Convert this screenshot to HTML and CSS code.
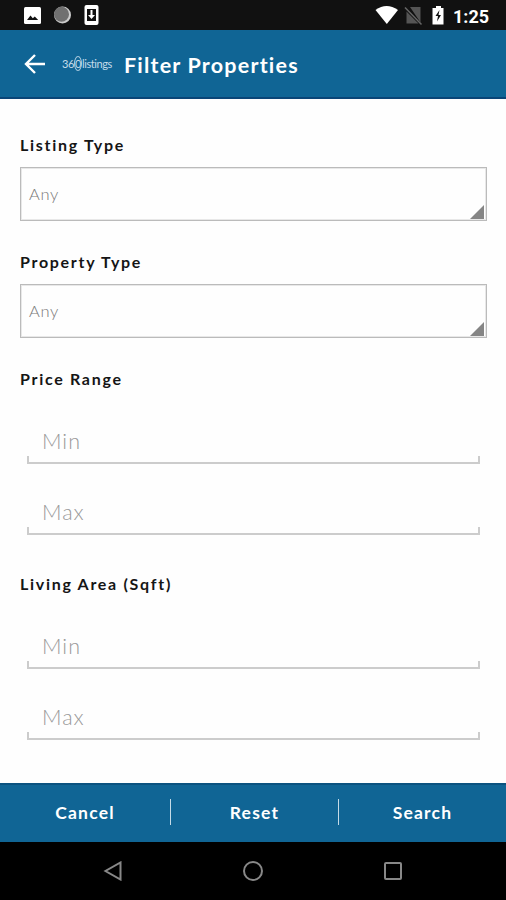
FILE: index.html
```html
<!DOCTYPE html>
<html lang="en">
<head>
<meta charset="utf-8">
<title>Filter Properties</title>
<link rel="stylesheet" href="styles.css">
</head>
<body>
<div class="status">
  <svg class="status-icons" width="120" height="30" viewBox="0 0 120 30">
    <rect x="24" y="7" width="17" height="17" rx="1.5" fill="#fff"/>
    <path d="M27 20l3.500-4.500 2.300 2.700 2-1.800 3.400 3.600z" fill="#111"/>
    <circle cx="62.500" cy="15" r="8.500" fill="#ccc"/>
    <circle cx="61.500" cy="14.300" r="7.500" fill="#707070"/>
    <rect x="84.500" y="5" width="14" height="20" rx="2" fill="#fff"/>
    <path d="M87 9h9v12h-9z" fill="#111"/>
    <path d="M90.500 10h2v5h2.500l-3.500 4-3.500-4h2.500z" fill="#fff"/>
  </svg>
  <svg class="status-icons" width="80" height="30" viewBox="370 0 80 30">
    <path d="M375.500 10Q386.500 2 398 10L386.800 24z" fill="#fff"/>
    <path d="M410 7h10.500v15.500zM406.500 11.500v12h12z" fill="#555"/>
    <path d="M405 7.500L421.500 24.500" stroke="#666" stroke-width="1.500"/>
    <path d="M436 6h5v2h2.500v16.500h-11V8h3.500z" fill="#fff"/>
    <path d="M439.500 10l-4 6h2.500l-1 5.500 4-6.500h-2.500z" fill="#111"/>
  </svg>
  <span class="clock">1:25</span>
</div>
<header class="bar">
  <svg class="back" width="22" height="20" viewBox="0 0 22 20"><path d="M21 10H2.500M11 1L2 10l9 9" fill="none" stroke="#fff" stroke-width="2.400"/></svg>
  <span class="brand">36<span class="ring">0</span>listings</span>
  <h1>Filter Properties</h1>
</header>
<main>
  <section>
    <h2>Listing Type</h2>
    <div class="select">Any</div>
  </section>
  <section>
    <h2>Property Type</h2>
    <div class="select">Any</div>
  </section>
  <section class="range">
    <h2>Price Range</h2>
    <div class="field min">Min</div>
    <div class="field">Max</div>
  </section>
  <section class="range">
    <h2>Living Area (Sqft)</h2>
    <div class="field min">Min</div>
    <div class="field">Max</div>
  </section>
</main>
<footer class="actions">
  <div class="action divided">Cancel</div>
  <div class="action divided">Reset</div>
  <div class="action">Search</div>
</footer>
<nav class="nav">
  <svg width="20" height="20" viewBox="0 0 20 20"><path d="M17.500 1.500v17L2.500 10z"/></svg>
  <svg width="20" height="20" viewBox="0 0 20 20"><circle cx="10" cy="10" r="9"/></svg>
  <svg width="20" height="20" viewBox="0 0 20 20"><rect x="2" y="2" width="16" height="16" rx="1"/></svg>
</nav>
</body>
</html>
```
FILE: styles.css
```css
* { box-sizing: border-box; }
body {
  margin: 0;
  width: 506px;
  height: 900px;
  display: flex;
  flex-direction: column;
  overflow: hidden;
  background: #fefefe;
  font-family: Lato, "Open Sans", sans-serif;
}
svg { display: block; flex: none; }
.status {
  height: 30px;
  flex: none;
  display: flex;
  justify-content: space-between;
  background: #111;
  color: #fff;
}
.status-icons:nth-child(2) { margin-left: auto; }
.clock {
  width: 56px;
  padding-left: 3px;
  font: 700 18px/33px Roboto, sans-serif;
}
.bar {
  height: 69px;
  flex: none;
  display: flex;
  align-items: center;
  padding-left: 24px;
  background: #106595;
  border-bottom: 2px solid #0a4577;
  color: #fff;
}
.brand {
  width: 62px;
  margin-left: 16px;
  font-size: 11px;
  line-height: 14px;
  letter-spacing: -0.4px;
  color: #c5dcea;
  white-space: nowrap;
}
.ring {
  border: 1px solid #a9cade;
  border-radius: 50%;
}
h1 {
  margin: 2px 0 0;
  font-size: 21.500px;
  line-height: 28px;
  letter-spacing: 1.200px;
  white-space: nowrap;
}
main {
  height: 684px;
  flex: none;
  padding: 35px 19px 0 20px;
}
section { height: 117px; }
.range { height: 205px; }
h2 {
  margin: 0;
  height: 33px;
  font-size: 16px;
  line-height: 22px;
  letter-spacing: 1.700px;
  color: #151515;
}
.select {
  height: 54px;
  position: relative;
  padding-left: 8px;
  border: 1px solid #bbb;
  box-shadow: inset 0 0 0 1px #e8e8e8;
  font-size: 16.500px;
  font-weight: 300;
  line-height: 53px;
  letter-spacing: 0.700px;
  color: #777;
}
.select::after {
  content: "";
  position: absolute;
  right: 2px;
  bottom: 1px;
  width: 14px;
  height: 14px;
  background: #858585;
  clip-path: polygon(100% 0, 100% 100%, 0 100%);
}
.field {
  height: 71px;
  margin: 0 7px;
  padding: 34px 0 0 15px;
  font-size: 21.500px;
  font-weight: 300;
  line-height: 28px;
  letter-spacing: 1px;
  color: #999;
  background:
    linear-gradient(#ccc, #ccc) left bottom / 100% 2px no-repeat,
    linear-gradient(#ccc, #ccc) left bottom / 2px 8px no-repeat,
    linear-gradient(#ccc, #ccc) right bottom / 2px 8px no-repeat;
}
.min {
  height: 63px;
  padding-top: 26px;
}
.actions {
  height: 59px;
  flex: none;
  display: grid;
  grid-template-columns: 171px 168px 167px;
  align-items: center;
  padding-bottom: 3px;
  background: #106595;
  border-top: 2px solid #0b5380;
  color: #fff;
}
.action {
  height: 26px;
  font-size: 17.500px;
  font-weight: 700;
  line-height: 27px;
  letter-spacing: 1.200px;
  text-align: center;
}
.divided { border-right: 1px solid #c5dbe7; }
.nav {
  height: 58px;
  flex: none;
  display: flex;
  justify-content: center;
  align-items: center;
  gap: 120px;
  background: #000;
  fill: none;
  stroke: #888;
  stroke-width: 2px;
}
```
